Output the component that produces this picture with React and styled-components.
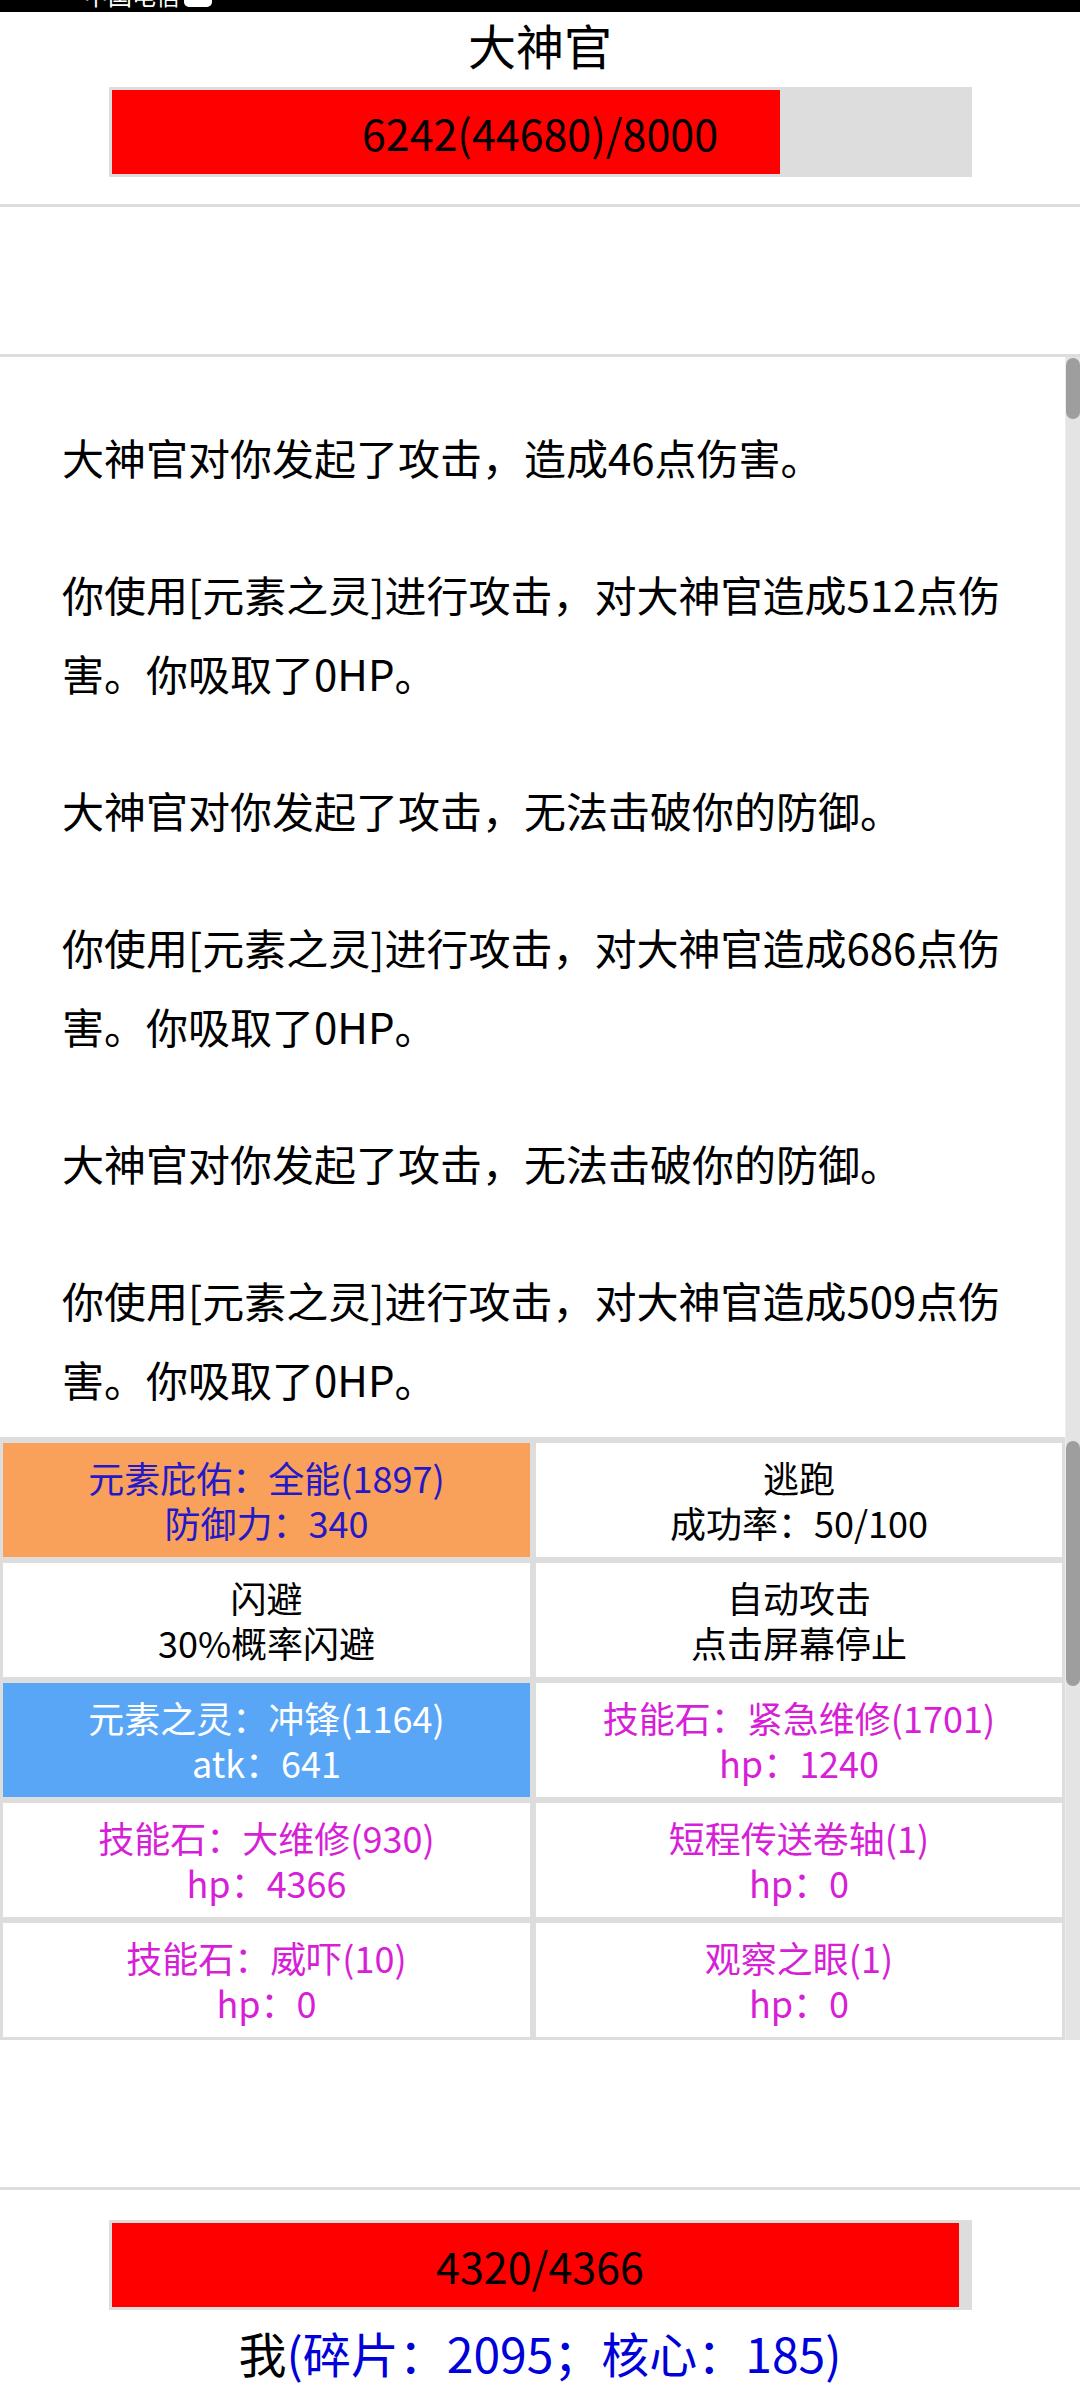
import React from 'react';
import styled, { createGlobalStyle } from 'styled-components';

const GlobalStyle = createGlobalStyle`
  html, body {
    margin: 0;
    padding: 0;
    background: #fff;
  }
  body {
    font-family: "Noto Sans CJK SC", "Noto Sans", sans-serif;
    color: #000;
  }
`;

const Screen = styled.div`
  width: 1080px;
  height: 2400px;
  display: flex;
  flex-direction: column;
  overflow: hidden;
  background: #fff;
`;

/* only the bottom sliver of the phone status bar is visible */
const StatusBar = styled.div`
  height: 12px;
  flex: none;
  background: #000;
  overflow: hidden;
  display: flex;
  align-items: flex-start;
  gap: 4px;
  padding-left: 84px;
`;

const Carrier = styled.span`
  color: #fff;
  font-size: 24px;
  line-height: 24px;
  margin-top: -17px;
`;

const Battery = styled.span`
  width: 28px;
  height: 20px;
  margin-top: -13px;
  border-radius: 5px;
  background: #fff;
`;

const Header = styled.div`
  flex: none;
  height: 195px;
  padding-top: 2px;
  box-sizing: border-box;
  border-bottom: 3px solid #ddd;
  display: flex;
  flex-direction: column;
  align-items: center;
`;

const Title = styled.div`
  font-size: 48px;
  line-height: 60px;
`;

const Bar = styled.div`
  width: 863px;
  height: 90px;
  box-sizing: border-box;
  padding: 3px;
  margin-top: ${p => p.$top}px;
  background: #ddd;
  display: grid;
`;

const Fill = styled.div`
  grid-area: 1 / 1;
  background: #f00;
  height: 100%;
`;

const BarLabel = styled.div`
  grid-area: 1 / 1;
  align-self: center;
  text-align: center;
  font-size: 43px;
  line-height: 1;
`;

const Gap = styled.div`
  flex: none;
  height: ${p => p.$h}px;
  border-bottom: 3px solid #ddd;
`;

/* a drawn scrollbar: the track beside a panel, the thumb at its offset */
const Track = styled.div`
  flex: none;
  width: 15px;
  box-sizing: border-box;
  padding-top: ${p => p.$offset}px;
  background: #e4e4e4;
  border-left: 1px solid #ededed;
`;

const Thumb = styled.div`
  width: 14px;
  height: ${p => p.$size}px;
  border-radius: 7px;
  background: #9e9e9e;
`;

const Log = styled.div`
  flex: none;
  height: 1080px;
  display: flex;
`;

const LogBody = styled.div`
  flex: 1;
  min-width: 0;
  padding: 60px 43px 0 62px;
`;

const Entry = styled.p`
  margin: 0 0 58px;
  font-size: 42px;
  line-height: 79px;
`;

const Actions = styled.div`
  flex: none;
  height: 603px;
  display: flex;
  background: #ddd;
`;

const ActionGrid = styled.div`
  flex: 1;
  display: grid;
  grid-template-columns: 527px 526px;
  grid-auto-rows: 114px;
  gap: 6px;
  padding: 6px 3px 3px 3px;
`;

const tones = {
  plain: { bg: '#fff', fg: '#000' },
  buff: { bg: '#f9a05a', fg: '#2419c9' },
  weapon: { bg: '#5aa6f6', fg: '#fff' },
  item: { bg: '#fff', fg: '#d61fd6' },
};

const Cell = styled.div`
  display: flex;
  flex-direction: column;
  align-items: center;
  justify-content: center;
  background: ${p => tones[p.$tone].bg};
  color: ${p => tones[p.$tone].fg};
  font-size: 36px;
  line-height: 45px;
  white-space: nowrap;
`;

const Footer = styled.div`
  flex: 1;
  padding-top: 30px;
  display: flex;
  flex-direction: column;
  align-items: center;
`;

const PlayerLine = styled.div`
  margin-top: 12px;
  font-size: 48px;
  line-height: 60px;
`;

const Stock = styled.span`
  color: #0000d8;
`;

const logEntries = [
  '大神官对你发起了攻击，造成46点伤害。',
  '你使用[元素之灵]进行攻击，对大神官造成512点伤害。你吸取了0HP。',
  '大神官对你发起了攻击，无法击破你的防御。',
  '你使用[元素之灵]进行攻击，对大神官造成686点伤害。你吸取了0HP。',
  '大神官对你发起了攻击，无法击破你的防御。',
  '你使用[元素之灵]进行攻击，对大神官造成509点伤害。你吸取了0HP。',
];

const actions = [
  { tone: 'buff', name: '元素庇佑：全能(1897)', info: '防御力：340' },
  { tone: 'plain', name: '逃跑', info: '成功率：50/100' },
  { tone: 'plain', name: '闪避', info: '30%概率闪避' },
  { tone: 'plain', name: '自动攻击', info: '点击屏幕停止' },
  { tone: 'weapon', name: '元素之灵：冲锋(1164)', info: 'atk：641' },
  { tone: 'item', name: '技能石：紧急维修(1701)', info: 'hp：1240' },
  { tone: 'item', name: '技能石：大维修(930)', info: 'hp：4366' },
  { tone: 'item', name: '短程传送卷轴(1)', info: 'hp：0' },
  { tone: 'item', name: '技能石：威吓(10)', info: 'hp：0' },
  { tone: 'item', name: '观察之眼(1)', info: 'hp：0' },
];

const boss = { name: '大神官', hp: 6242, shield: 44680, max: 8000 };
const player = { hp: 4320, max: 4366, shards: 2095, cores: 185 };

function HpBar({ value, max, label, top = 0 }) {
  return (
    <Bar $top={top}>
      <Fill style={{ width: `${(value / max) * 100}%` }} />
      <BarLabel>{label}</BarLabel>
    </Bar>
  );
}

export default function App() {
  return (
    <Screen>
      <GlobalStyle />
      <StatusBar>
        <Carrier>中国电信</Carrier>
        <Battery />
      </StatusBar>

      <Header>
        <Title>{boss.name}</Title>
        <HpBar
          top={13}
          value={boss.hp}
          max={boss.max}
          label={`${boss.hp}(${boss.shield})/${boss.max}`}
        />
      </Header>

      <Gap $h={147} />

      <Log>
        <LogBody>
          {logEntries.map((text, i) => (
            <Entry key={i}>{text}</Entry>
          ))}
        </LogBody>
        <Track $offset={1}>
          <Thumb $size={61} />
        </Track>
      </Log>

      <Actions>
        <ActionGrid>
          {actions.map((a, i) => (
            <Cell key={i} $tone={a.tone}>
              <div>{a.name}</div>
              <div>{a.info}</div>
            </Cell>
          ))}
        </ActionGrid>
        <Track $offset={4}>
          <Thumb $size={245} />
        </Track>
      </Actions>

      <Gap $h={147} />

      <Footer>
        <HpBar value={player.hp} max={player.max} label={`${player.hp}/${player.max}`} />
        <PlayerLine>
          我<Stock>(碎片：{player.shards}；核心：{player.cores})</Stock>
        </PlayerLine>
      </Footer>
    </Screen>
  );
}
